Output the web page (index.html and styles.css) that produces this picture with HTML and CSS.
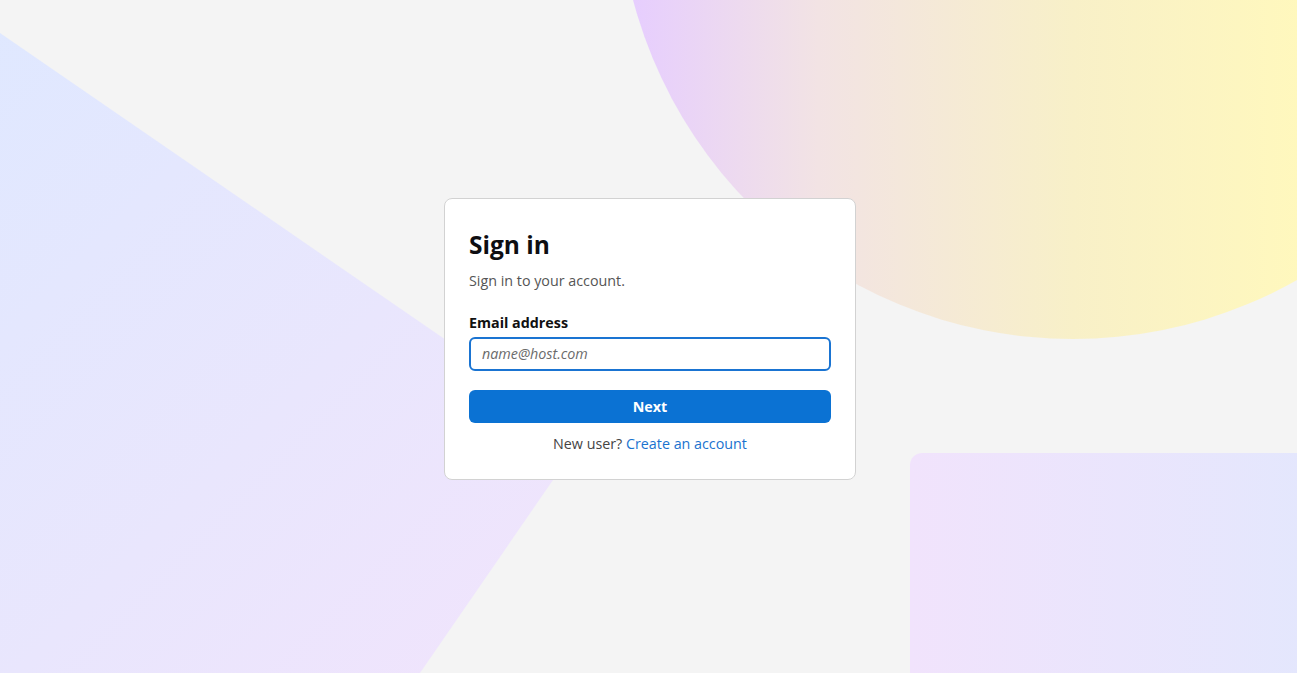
FILE: index.html
```html
<!DOCTYPE html>
<html lang="en">
<head>
<meta charset="utf-8">
<title>Sign in</title>
<link rel="stylesheet" href="styles.css">
</head>
<body>
<div class="bg">
  <div class="shape shape-left"></div>
  <div class="shape shape-circle"></div>
  <div class="shape shape-rect"></div>
</div>
<main class="page">
  <form class="card">
    <h1 class="title">Sign in</h1>
    <p class="subtitle">Sign in to your account.</p>
    <label class="label" for="email">Email address</label>
    <input class="input" id="email" type="email" placeholder="name@host.com">
    <button class="btn" type="button">Next</button>
    <p class="signup">New user? <a class="link" href="#">Create an account</a></p>
  </form>
</main>
</body>
</html>
```
FILE: styles.css
```css
* { box-sizing: border-box; }
html, body { margin: 0; height: 100%; }
body {
  background: #f4f4f4;
  font-family: "Open Sans", "Noto Sans", sans-serif;
  color: #111;
  overflow: hidden;
}
.bg {
  position: fixed;
  inset: 0;
  overflow: hidden;
  z-index: 0;
}
.shape { position: absolute; }
.shape-left {
  inset: 0;
  clip-path: polygon(0 33px, 584px 435px, 420px 673px, 0 673px);
  background: linear-gradient(135deg, #dfe8ff 0%, #e9e6fd 35%, #f3e3fc 70%);
}
.shape-circle {
  left: 618px;
  top: -571px;
  width: 910px;
  height: 910px;
  border-radius: 50%;
  background: linear-gradient(90deg, #e6cdff 1%, #f2e3e4 22%, #f8f0c8 50%, #fff8bd 75%);
}
.shape-rect {
  left: 910px;
  top: 453px;
  width: 420px;
  height: 260px;
  border-radius: 12px;
  background: linear-gradient(90deg, #f1e3fc 0%, #e3e7fd 100%);
}
.page {
  position: relative;
  z-index: 1;
  height: 100%;
  padding: 4px 0 0 3px;
  display: flex;
  align-items: center;
  justify-content: center;
}
.card {
  width: 412px;
  background: #fff;
  border: 1px solid #d2d2d2;
  border-radius: 8px;
  padding: 29px 24px 26px;
  display: flex;
  flex-direction: column;
}
.title {
  margin: 0;
  font-size: 24.5px;
  font-weight: 700;
  line-height: 33px;
  color: #0e0e12;
}
.subtitle {
  margin: 10px 0 0;
  font-size: 14.3px;
  line-height: 19px;
  color: #555;
}
.label {
  margin-top: 23px;
  font-size: 14.3px;
  font-weight: 700;
  line-height: 19px;
  color: #111;
}
.input {
  margin-top: 5px;
  height: 34px;
  border: 2px solid #1a74d2;
  border-radius: 6px;
  padding: 0 11px;
  font-family: inherit;
  font-size: 14.3px;
  color: #222;
  outline: none;
}
.input::placeholder {
  font-style: italic;
  color: #6b6b6b;
}
.btn {
  margin-top: 19px;
  height: 33px;
  border: 0;
  border-radius: 6px;
  background: #0b72d3;
  color: #fff;
  font-family: inherit;
  font-size: 14.3px;
  font-weight: 700;
}
.signup {
  margin: 11px 0 0;
  text-align: center;
  font-size: 14.3px;
  line-height: 19px;
  color: #444;
}
.link {
  color: #1a73cf;
  text-decoration: none;
}
```
